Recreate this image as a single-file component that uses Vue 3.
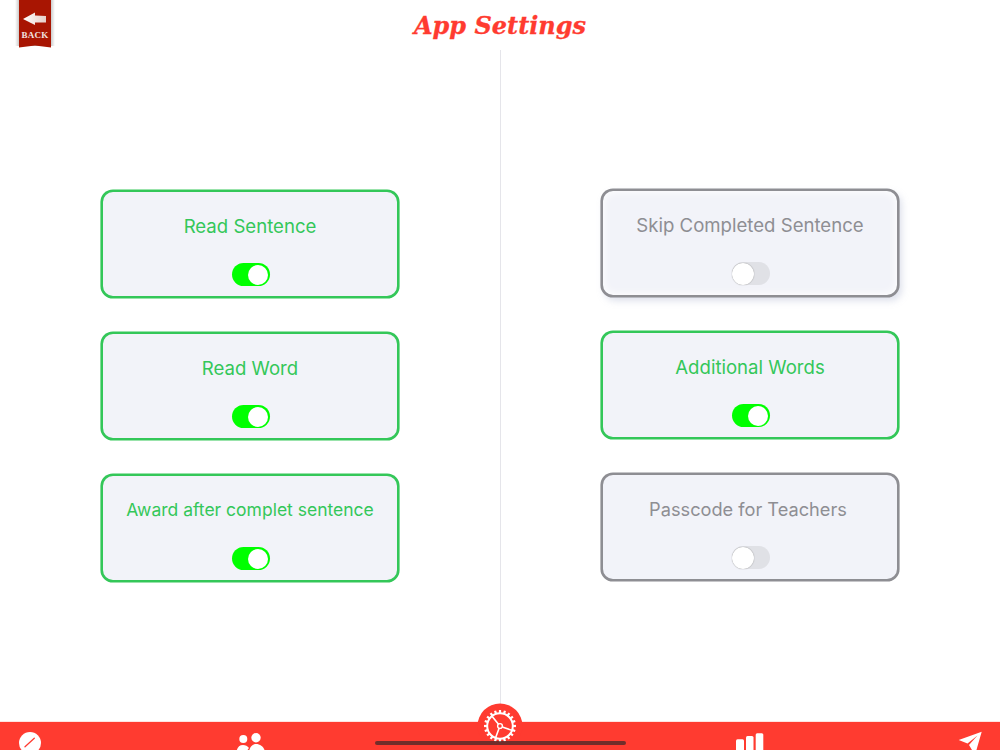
<script setup>
const leftCards = [
  { label: 'Read Sentence', on: true },
  { label: 'Read Word', on: true },
  { label: 'Award after complet sentence', on: true, small: true },
]
const rightCards = [
  { label: 'Skip Completed Sentence', on: false, raised: true },
  { label: 'Additional Words', on: true },
  { label: 'Passcode for Teachers', on: false, nudge: true },
]
const teeth = Array.from({ length: 20 }, (_, i) => i * 18)
</script>

<template>
  <div class="screen">
    <header class="header">
      <a class="back">
        <svg class="ribbon" width="46" height="52" viewBox="0 0 46 52">
          <defs>
            <linearGradient id="shade" x1="0" x2="1" y1="0" y2="0">
              <stop offset="0" stop-color="#000" stop-opacity="0" />
              <stop offset="0.15" stop-color="#000" stop-opacity="0.3" />
              <stop offset="0.85" stop-color="#000" stop-opacity="0.3" />
              <stop offset="1" stop-color="#000" stop-opacity="0" />
            </linearGradient>
            <linearGradient id="arrow" x1="0" x2="1" y1="0" y2="0">
              <stop offset="0" stop-color="#ffffff" />
              <stop offset="1" stop-color="#e6cfc9" />
            </linearGradient>
          </defs>
          <rect x="3" y="0" width="40" height="46" fill="url(#shade)" />
          <path d="M7 0H39V47.5L23 45.5L7 47.5Z" fill="#a81502" />
          <path d="M11 19L23 12.5V15.5L34 16V22.5H23V25Z" fill="url(#arrow)" />
        </svg>
        <span class="back-text">BACK</span>
      </a>
      <h1 class="title">App Settings</h1>
    </header>

    <main class="main">
      <section class="col left">
        <div v-for="c in leftCards" :key="c.label" class="card" :class="{ on: c.on, small: c.small }">
          <span class="label">{{ c.label }}</span>
          <span class="toggle" :class="{ on: c.on }"><i class="knob"></i></span>
        </div>
      </section>
      <section class="col right">
        <div
          v-for="c in rightCards"
          :key="c.label"
          class="card"
          :class="{ on: c.on, raised: c.raised, nudge: c.nudge }"
        >
          <span class="label">{{ c.label }}</span>
          <span class="toggle" :class="{ on: c.on }"><i class="knob"></i></span>
        </div>
      </section>
    </main>

    <footer class="bar">
      <span class="item">
        <svg width="24" height="24" viewBox="0 0 24 24">
          <circle cx="12" cy="12" r="11" fill="#fff" />
          <path d="M7 15.7L16.3 7.3" stroke="#ff3b30" stroke-width="1.3" stroke-linecap="round" />
        </svg>
      </span>
      <span class="item">
        <svg width="32" height="24" viewBox="0 0 32 24">
          <circle cx="9.3" cy="8" r="4" fill="#fff" />
          <circle cx="22" cy="6.7" r="4.7" fill="#fff" />
          <path d="M2.5 22C2.5 17 5 14 9 14C11.5 14 13.5 15 15 17C13.5 18.5 13 20 13 22Z" fill="#fff" />
          <path d="M15 22C15 17 18 13 22 13C27 13 31 17 31 22Z" fill="#fff" />
        </svg>
      </span>
      <span class="item gear-item">
        <svg class="gear" width="46" height="46" viewBox="0 0 46 46">
          <circle cx="23" cy="23" r="22.5" fill="#ff3b30" />
          <g fill="#fff">
            <rect v-for="a in teeth" :key="a" x="21.9" y="7" width="2.2" height="3.5" :transform="`rotate(${a} 23 23)`" />
          </g>
          <g fill="none" stroke="#fff">
            <circle cx="23" cy="23" r="12.8" stroke-width="2" />
            <circle cx="23" cy="23" r="2.4" stroke-width="1.4" />
            <path d="M25.3 23.9L36 27.8M21.5 21.2L15 13.2M22.1 25.3L18.5 35" stroke-width="1.6" />
          </g>
        </svg>
      </span>
      <span class="item">
        <svg width="28" height="24" viewBox="0 0 28 24">
          <rect x="0" y="8.3" width="8" height="16" rx="1.5" fill="#fff" />
          <rect x="10" y="5" width="7.5" height="20" rx="1.5" fill="#fff" />
          <rect x="19.7" y="2.3" width="7.6" height="22" rx="1.5" fill="#fff" />
        </svg>
      </span>
      <span class="item">
        <svg width="26" height="24" viewBox="0 0 26 24">
          <path d="M24.7 0.7L1.7 9L10.5 12.5L20.5 4.5L12 14L18 24Z" fill="#fff" />
        </svg>
      </span>
      <i class="home"></i>
    </footer>
  </div>
</template>

<style scoped>
.screen {
  position: relative;
  width: 1000px;
  height: 750px;
  overflow: hidden;
  background: #fff;
  display: flex;
  flex-direction: column;
  font-family: Inter, "Liberation Sans", sans-serif;
}
.header {
  position: relative;
  height: 50px;
  flex: none;
  display: flex;
  align-items: center;
  justify-content: center;
}
.back {
  position: absolute;
  left: 12px;
  top: 0;
  width: 46px;
  height: 52px;
}
.ribbon {
  display: block;
}
.back-text {
  position: absolute;
  left: 0;
  right: 0;
  top: 30px;
  text-align: center;
  font: bold 9px/11px "Liberation Serif", serif;
  color: #f3e4e0;
  letter-spacing: 0.3px;
}
.title {
  margin: 2px 0 0;
  font: italic bold 24px/1 "DejaVu Serif", serif;
  color: #ff3b30;
  -webkit-text-stroke: 0.3px #ff3b30;
}
.main {
  flex: 1;
  display: grid;
  grid-template-columns: 1fr 1fr;
  min-height: 0;
  position: relative;
}
.main::before {
  content: "";
  position: absolute;
  left: 500px;
  top: 0;
  bottom: 0;
  width: 1px;
  background: #e5e5ea;
}
.col {
  display: flex;
  flex-direction: column;
  align-items: center;
  justify-content: center;
  gap: 34px;
}
.col.left {
  padding-top: 1px;
}
.col.right {
  padding-bottom: 1px;
}
.card {
  box-sizing: border-box;
  width: 298px;
  height: 108px;
  border: 2px solid #8e8e93;
  border-radius: 12px;
  background: #f2f3f9;
  display: flex;
  flex-direction: column;
  align-items: center;
  padding-top: 22px;
  color: #8e8e93;
  box-shadow: 0 0 0 0.6px #8e8e93;
}
.card.on {
  border-color: #34c759;
  color: #34c759;
  box-shadow: 0 0 0 0.6px #34c759;
}
.card.raised {
  box-shadow: 0 0 0 0.6px #8e8e93, 3px 4px 7px rgba(160, 170, 200, 0.35), inset 0 0 9px 1px rgba(255, 255, 255, 0.95);
}
.label {
  font-size: 18.6px;
  line-height: 24px;
  white-space: nowrap;
  margin-bottom: 25px;
}
.card.small .label {
  font-size: 17.5px;
}
.card.nudge .label {
  font-size: 18.2px;
  transform: translateX(-2px);
}
.toggle {
  width: 38px;
  height: 23px;
  box-sizing: border-box;
  border-radius: 12px;
  background: #e0e1e6;
  display: flex;
  align-items: center;
  justify-content: flex-start;
  transform: translateX(1px);
}
.toggle.on {
  background: #00ff00;
  justify-content: flex-end;
  padding: 0 2px;
}
.knob {
  width: 22px;
  height: 22px;
  border-radius: 50%;
  background: #fff;
  box-shadow: 0 0 1px rgba(0, 0, 0, 0.5);
}
.toggle.on .knob {
  width: 20px;
  height: 20px;
  box-shadow: none;
}
.bar {
  position: relative;
  height: 29px;
  flex: none;
  background: #ff3b30;
  border-top: 1px solid #ffe3e1;
  box-sizing: border-box;
  display: grid;
  grid-template-columns: 60px 380px 120px 380px 60px;
}
.item {
  display: flex;
  justify-content: center;
  align-items: flex-start;
  padding-top: 9px;
  height: 24px;
}
.gear-item {
  padding-top: 0;
}
.gear {
  position: absolute;
  left: 477px;
  top: -19px;
}
.home {
  position: absolute;
  left: 375px;
  width: 251px;
  top: 19px;
  height: 4px;
  border-radius: 2px;
  background: rgba(60, 40, 40, 0.72);
}
</style>
